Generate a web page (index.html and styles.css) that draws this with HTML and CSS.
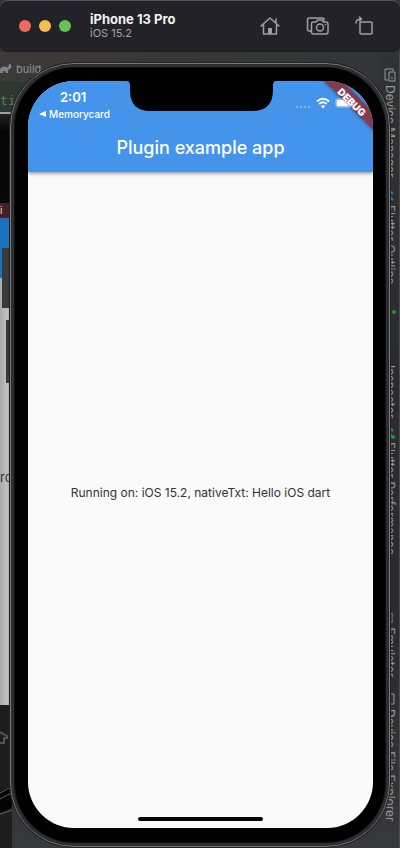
FILE: index.html
```html
<!DOCTYPE html>
<html lang="en">
<head>
<meta charset="utf-8">
<meta name="viewport" content="width=device-width, initial-scale=1">
<title>iPhone 13 Pro – iOS 15.2</title>
<link rel="stylesheet" href="styles.css">
</head>
<body>
<div class="desktop">
  <div class="editor">
    <div class="tab">
      <svg class="gradle" viewBox="0 0 12 10" aria-hidden="true"><path d="M0 9V5Q1 2 5 2.500Q8 4 9 2Q8 0 10 0Q13 2 10 5L8 6V9H6L5 7L3 7V9Z"/></svg>
      <span>build</span>
    </div>
    <div class="code">ti</div>
    <div class="other-phone">
      <div class="other-top"></div>
      <div class="other-banner">i</div>
      <div class="other-bar"></div>
      <div class="other-body"><i class="key key-up"></i><i class="key key-down"></i><span>ro</span></div>
      <div class="other-bottom">
        <svg viewBox="0 0 12 140" preserveAspectRatio="none" aria-hidden="true">
          <path d="M0 87Q7 83 12 81V102Q7 105 0 108Z" fill="#050505"/>
          <path d="M0 88Q7 84 12 82M0 94Q7 90 12 88M0 109Q7 107 12 105" fill="none" stroke="#666"/>
          <path d="M0 27L7 31V33H4V38H0" fill="none" stroke="#555" stroke-width="2"/>
        </svg>
      </div>
    </div>
  </div>
  <div class="rail">
    <div class="tool"><svg viewBox="0 0 12 14" aria-hidden="true"><path d="M4 12H1V1H9V3M5 4H11V13H5ZM7 10H9"/></svg><span>Device Manager</span></div>
    <div class="tool"><svg class="flutter" viewBox="0 0 12 14" aria-hidden="true"><path d="M5 2L9 6M5 8L9 12"/></svg><span>Flutter Outline</span></div>
    <div class="tool"><i class="dot"></i><span class="low">Inspector</span></div>
    <div class="tool"><svg class="flutter" viewBox="0 0 12 14" aria-hidden="true"><path d="M5 2L9 6M5 8L9 12"/></svg><i class="dot over"></i><span>Flutter Performance</span></div>
    <div class="tool"><span>▯ Emulator</span></div>
    <div class="tool"><svg viewBox="0 0 12 14" aria-hidden="true"><path d="M3 2H10V12H3Z"/></svg><span>Device File Explorer</span></div>
  </div>
</div>

<header class="titlebar">
  <div class="lights">
    <button class="light close" aria-label="Close"></button>
    <button class="light minimize" aria-label="Minimize"></button>
    <button class="light zoom" aria-label="Zoom"></button>
  </div>
  <div class="device">
    <h1>iPhone 13 Pro</h1>
    <p>iOS 15.2</p>
  </div>
  <div class="actions">
    <button aria-label="Home"><svg width="20" height="20" viewBox="0 0 20 20"><path d="M1 10L10 2L19 10M16 7V3M3.500 9V18H16.500V9"/><path class="solid" d="M8 18V12H12V18Z"/></svg></button>
    <button aria-label="Screenshot"><svg width="26" height="20" viewBox="0 0 26 20"><path d="M6.500 15H5Q3.500 15 3.500 13V4Q3.500 2 5 2H18Q20 2 20 4M9 6H12L13.500 4H18L19.500 6H22Q24 6 24 8V16Q24 18 22 18H9.500Q7.500 18 7.500 16V8Q7.500 6 9 6Z"/><circle cx="16" cy="11.500" r="3.500"/><circle class="solid" cx="21.500" cy="8.500" r=".8"/></svg></button>
    <button aria-label="Rotate"><svg width="20" height="20" viewBox="0 0 20 20"><path d="M2 7Q2 3 7 3M5.500 1L7.500 3L5.500 5"/><rect x="6" y="6" width="12" height="12" rx="1"/></svg></button>
  </div>
</header>

<main class="phone">
  <div class="screen">
    <svg class="notch" width="150" height="30" viewBox="0 0 150 30" aria-hidden="true"><path d="M0 0H150Q147 0 147 4V9C147 24 139 30 127 30H24C12 30 4 24 4 9V4Q4 0 0 0Z"/></svg>
    <div class="appbar">
      <div class="status">
        <div class="status-left">
          <span class="time">2:01</span>
          <a class="back" href="#"><svg width="7" height="8" viewBox="0 0 7 8" aria-hidden="true"><path d="M0 4L7 1V7Z"/></svg>Memorycard</a>
        </div>
        <div class="status-right">
          <svg class="signal" width="16" height="4" viewBox="0 0 16 4" aria-hidden="true"><path d="M1 1h2v2h-2zM5 1h2v2h-2zM9 1h2v2h-2zM13 1h2v2h-2z"/></svg>
          <svg class="wifi" width="14" height="12" viewBox="0 0 14 12" aria-hidden="true"><path d="M1 4.500Q7-1 13 4.500M3.200 7Q7 3.500 10.800 7"/><path class="tip" d="M7 11.500L4.800 9Q7 7.400 9.200 9Z"/></svg>
          <svg class="battery" width="22" height="10" viewBox="0 0 22 10" aria-hidden="true"><rect x=".5" y=".5" width="19" height="9" rx="2.500" fill="none" stroke="#fff" stroke-opacity=".25"/><rect x="1.500" y="1.500" width="17" height="7" rx="1.500" fill="#fff"/></svg>
        </div>
      </div>
      <h2>Plugin example app</h2>
    </div>
    <div class="ribbon"></div>
    <div class="ribbon ribbon-text">DEBUG</div>
    <div class="content"><p>Running on: iOS 15.2, nativeTxt: Hello iOS dart</p></div>
    <div class="home-indicator"></div>
  </div>
</main>
</body>
</html>
```
FILE: styles.css
```css
* { box-sizing: border-box; }

body {
  margin: 0;
  min-height: 100vh;
  display: flex;
  flex-direction: column;
  position: relative;
  overflow-x: hidden;
  background: #2b2d2e;
  font-family: Inter, "Liberation Sans", sans-serif;
}

h1, h2, p { margin: 0; }
button { border: 0; padding: 0; background: none; }

/* Windows behind the simulator */
.desktop {
  position: absolute;
  inset: 0;
  display: flex;
  justify-content: space-between;
  overflow: hidden;
  padding-top: 52px;
  background: linear-gradient(#333435, #28292a 70%, #36383a);
}

.editor {
  width: 100%;
  display: flex;
  flex-direction: column;
}

.tab {
  height: 30px;
  display: flex;
  align-items: center;
  gap: 4px;
  padding-top: 4px;
  background: linear-gradient(90deg, #3c3a38, #333536);
  color: #8f9092;
  font-size: 11px;
}

.gradle { width: 12px; height: 10px; fill: #7b828d; }

.code {
  width: 50px;
  height: 30px;
  padding-top: 10px;
  background: #2c382f;
  color: #5c7c59;
  font: 13px/18px "DejaVu Sans Mono", monospace;
}

.other-phone {
  flex: 1;
  width: 12px;
  display: flex;
  flex-direction: column;
  background: #000;
}

.other-top { height: 91px; border-top: 2px solid #a0a1a2; background: linear-gradient(#222, #050505 20%, #080808); }
.other-banner { height: 15px; background: #4a1d28; color: #ddd; font-size: 10px; line-height: 15px; }
.other-bar { height: 60px; background: #1c72bd; }

.other-body {
  position: relative;
  height: 427px;
  display: flex;
  align-items: center;
  background: linear-gradient(90deg, #aaa, #c0c0c0 60%, #8c8c8c);
  color: #333;
  font-size: 13px;
}

.other-body span { margin-bottom: 30px; }
.key { position: absolute; right: 0; background: #3a3a3a; }
.key-up { top: -30px; width: 10px; height: 60px; }
.key-down { top: 42px; width: 6px; height: 63px; }
.other-bottom { flex: 1; background: #1d1d1e; }
.other-bottom svg { display: block; width: 12px; height: 140px; }

.rail {
  width: 20px;
  flex: none;
  display: grid;
  grid-template-rows: 120px 117px 120px 185px 82px 1fr;
  padding-top: 16px;
  border-right: 1px solid #4a4b50;
  background: linear-gradient(#303234, #2c2c30 40%, #2c2c30 75%, #363839);
  color: #96979a;
  font-size: 12px;
}

.tool {
  position: relative;
  display: flex;
  flex-direction: column;
  align-items: center;
  gap: 3px;
}

.tool span { writing-mode: vertical-rl; line-height: 14px; white-space: nowrap; }
.tool svg { width: 12px; height: 14px; fill: none; stroke: #96979a; flex: none; }
.tool .flutter { stroke: #2f82a3; stroke-width: 2; }
.tool .low { margin-top: 48px; }
.dot { width: 4px; height: 4px; margin: 5px 0 0 8px; border-radius: 50%; background: #159c28; flex: none; }
.dot.over { position: absolute; top: 5px; right: 4px; }

/* Simulator title bar */
.titlebar {
  position: relative;
  height: 52px;
  flex: none;
  display: flex;
  align-items: center;
  padding: 0 26px 0 19px;
  border-top: 1px solid #55545a;
  border-bottom: 1px solid #1b1a1e;
  border-radius: 8px;
  background: #242229;
}

.lights { display: flex; gap: 8px; }
.light { width: 12px; height: 12px; border-radius: 50%; }
.close { background: #ec6a5f; }
.minimize { background: #f5be4f; }
.zoom { background: #61c454; }

.device { margin-left: 19px; flex: 1; }
.device h1 { color: #f2f2f3; font-size: 13px; line-height: 14px; font-weight: 700; }
.device p { color: #a3a2a6; font-size: 11px; line-height: 14px; }

.actions { display: flex; align-items: center; gap: 24px; }
.actions button { display: flex; }
.actions svg { fill: none; stroke: #a09fa5; stroke-width: 1.5; stroke-linejoin: round; stroke-linecap: round; }
.actions .solid { fill: #a09fa5; stroke: none; }

/* Phone */
.phone {
  position: relative;
  flex: 1;
  display: flex;
  margin: 11px 10px 1px;
  padding: 17px 16px 18px 17px;
  border: 1px solid #77787a;
  border-radius: 64px;
  background: #000;
  box-shadow: inset 0 0 0 3px #2d2e2f, inset 0 0 0 4px #111, 0 0 0 1px #222;
}

.screen {
  position: relative;
  flex: 1;
  display: flex;
  flex-direction: column;
  overflow: hidden;
  border-radius: 46px;
  background: #fafafa;
}

.notch { position: absolute; z-index: 3; top: 0; left: 50%; margin-left: -75px; fill: #000; }

.appbar {
  height: 91px;
  flex: none;
  display: flex;
  flex-direction: column;
  background: #4594ec;
  box-shadow: 0 1px 4px rgba(0, 0, 0, .5);
  color: #fff;
}

.status { height: 43px; display: flex; justify-content: space-between; padding: 8px 16px 0 11px; }
.status-left { display: flex; flex-direction: column; }
.time { padding-left: 21px; font-size: 13px; line-height: 16px; font-weight: 600; }
.back { display: flex; align-items: center; gap: 3px; color: #fff; font-size: 10px; line-height: 18px; font-weight: 500; text-decoration: none; }
.back svg { fill: #fff; }
.status-right { position: relative; z-index: 3; display: flex; align-items: center; height: 28px; gap: 5px; }
.signal { fill: #fff; fill-opacity: .35; margin-top: 8px; }
.wifi { fill: none; stroke: #fff; stroke-width: 2; }
.wifi .tip { fill: #fff; stroke: none; }

.appbar h2 { text-align: center; font-size: 18px; line-height: 48px; font-weight: 500; }

.ribbon {
  position: absolute;
  z-index: 2;
  top: 14px;
  right: -30px;
  width: 100px;
  height: 12px;
  transform: rotate(45deg);
  background: #863a50;
  box-shadow: 0 0 4px rgba(0, 0, 0, .5);
}

.ribbon-text {
  z-index: 4;
  top: 15px;
  right: -29px;
  background: none;
  box-shadow: none;
  color: #fff;
  font-size: 10px;
  line-height: 12px;
  font-weight: 900;
  text-align: center;
  text-shadow: 0 0 2px #863a50, 0 0 1px #863a50;
}

.content { flex: 1; display: flex; align-items: center; justify-content: center; padding-bottom: 14px; color: #333; }
.content p { font-size: 12px; line-height: 16px; white-space: nowrap; }

.home-indicator { position: absolute; bottom: 7px; left: 32%; right: 32%; height: 4px; border-radius: 2px; background: #000; }
```
